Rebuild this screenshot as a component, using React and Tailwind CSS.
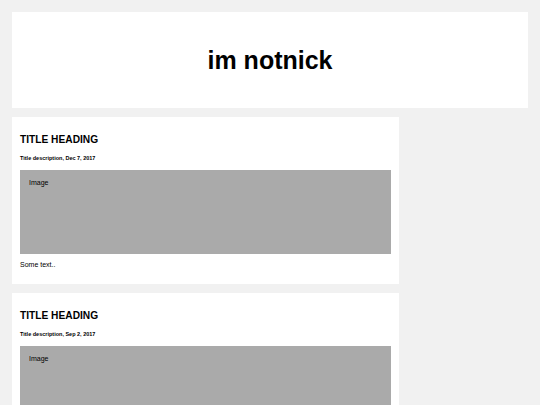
const posts = [
  { title: "TITLE HEADING", desc: "Title description, Dec 7, 2017" },
  { title: "TITLE HEADING", desc: "Title description, Sep 2, 2017" },
];

export default function App() {
  return (
    <div
      className="min-h-screen bg-[#f1f1f1] p-[12px] text-black"
      style={{ fontFamily: '"Liberation Sans", Arial, sans-serif' }}
    >
      {/* Header */}
      <header className="h-[96px] bg-white flex items-center justify-center">
        <h1 className="text-[25px] font-bold leading-none">im notnick</h1>
      </header>

      <div className="flex mt-[9px]">
        {/* Left column */}
        <div className="w-[387px] flex flex-col gap-[9px]">
          {posts.map((p, i) => (
            <div key={i} className="bg-white px-[8px] pt-[17.5px] pb-[16px]">
              <h2 className="text-[10.2px] font-bold leading-none">{p.title}</h2>
              <h5 className="text-[5.5px] font-bold leading-none mt-[11px]">{p.desc}</h5>
              <div className="h-[84px] bg-[#aaaaaa] mt-[9px] pt-[9px] pl-[9px]">
                <p className="text-[7px] leading-none">Image</p>
              </div>
              <p className="text-[7px] leading-none mt-[7px]">Some text..</p>
            </div>
          ))}
        </div>
        {/* Right column (empty) */}
        <div className="flex-1" />
      </div>
    </div>
  );
}
